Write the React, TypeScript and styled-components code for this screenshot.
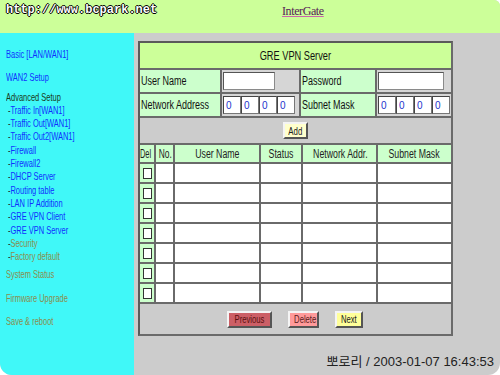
import React from "react";
import styled, { createGlobalStyle } from "styled-components";

const GlobalStyle = createGlobalStyle`
  html, body {
    margin: 0;
    padding: 0;
    background: #ffffff;
  }
  body {
    font-family: "Liberation Sans", Arial, sans-serif;
  }
`;

const sans = `"Liberation Sans", Arial, sans-serif`;

// the old page used a condensed face; squeeze Arial-width text to match
const Narrow = styled.span<{ $x?: number; $o?: string }>`
  display: inline-block;
  white-space: nowrap;
  transform: scaleX(${(p) => p.$x ?? 0.73});
  transform-origin: ${(p) => p.$o ?? "left"} center;
`;

const Frame = styled.div`
  width: 500px;
  height: 375px;
  display: grid;
  grid-template-rows: 33px 1fr;
  grid-template-columns: 134px 1fr;
  border-radius: 0 6px 12px 12px;
  overflow: hidden;
  background: #cccccc;
`;

const Header = styled.div`
  grid-column: 1 / 3;
  background: #ccff99;
  display: flex;
  align-items: flex-start;
  padding: 3px 0 0 6px;
`;

const SiteUrl = styled.div`
  font-family: "Liberation Mono", "DejaVu Sans Mono", monospace;
  font-weight: bold;
  font-size: 12px;
  line-height: 14px;
  color: #ffffff;
  text-shadow: 1px 0 0 #000, -1px 0 0 #000, 0 1px 0 #000, 0 -1px 0 #000;
  width: 148px;
  white-space: nowrap;
`;

const Brand = styled.a`
  margin-left: 128px;
  margin-top: 1px;
  font-family: "Liberation Serif", "Times New Roman", serif;
  font-size: 12px;
  letter-spacing: -0.4px;
  color: #552255;
  text-decoration: underline;
  text-decoration-color: #cc66aa;
`;

const Sidebar = styled.nav`
  background: #40f8f8;
  display: flex;
  flex-direction: column;
  padding: 15px 0 0 6px;
  font-family: ${sans};
  font-size: 11.5px;
`;

const MenuItem = styled.div<{ $tone?: "link" | "head" | "muted"; $gap?: number; $sub?: boolean }>`
  line-height: 13.3px;
  margin-top: ${(p) => p.$gap ?? 0}px;
  padding-left: ${(p) => (p.$sub ? 3 : 0)}px;
  white-space: nowrap;
  transform: scaleX(0.65);
  transform-origin: left center;
  color: ${(p) => (p.$tone === "head" ? "#1a3a1a" : p.$tone === "muted" ? "#8c8c4c" : "#1030ff")};
`;

const Dash = styled.span`
  color: #1a2a1a;
`;

const Main = styled.main`
  display: flex;
  flex-direction: column;
  padding: 8px 0 0 4px;
  font-family: ${sans};
`;

const Panel = styled.div`
  width: 311px;
  border: 2px solid #5a5a5a;
  border-right-color: #6a6a6a;
  border-bottom-color: #6a6a6a;
  background: #cccccc;
  display: flex;
  flex-direction: column;
`;

const TitleBar = styled.div`
  height: 25px;
  background: #ccff99;
  display: flex;
  align-items: center;
  justify-content: center;
  font-size: 12px;
  color: #111;
  border-bottom: 2px solid #6a6a6a;
`;

const FormGrid = styled.div`
  display: grid;
  grid-template-columns: 80px 77px 74px 74px;
  grid-auto-rows: 22px;
  gap: 2px;
  background: #6a6a6a;
  padding-bottom: 2px;
`;

const Label = styled.div`
  background: #ccffcc;
  font-size: 12.5px;
  color: #111;
  display: flex;
  align-items: center;
  padding-left: 1px;
  overflow: hidden;
`;

const InputCell = styled.div`
  background: #d6d6d6;
  display: flex;
  align-items: center;
  padding-left: 1px;
`;

const TextBox = styled.input<{ $w: number }>`
  width: ${(p) => p.$w}px;
  height: 18px;
  box-sizing: border-box;
  border: 1px solid #8a8a8a;
  border-top-color: #555;
  border-left-color: #555;
  background: #ffffff;
  outline: none;
`;

const IpBox = styled.input`
  width: 18px;
  height: 18px;
  box-sizing: border-box;
  border: 1px solid #777;
  border-top-color: #444;
  border-left-color: #444;
  background: #ffffff;
  color: #2233cc;
  font-family: ${sans};
  font-size: 10px;
  padding: 0 0 0 2px;
  outline: none;
`;

const AddRow = styled.div`
  height: 25px;
  display: flex;
  align-items: center;
  padding-left: 143px;
  border-bottom: 2px solid #6a6a6a;
`;

const Btn = styled.button<{ $bg: string; $fg?: string; $w: number }>`
  width: ${(p) => p.$w}px;
  height: 17px;
  padding: 0;
  background: ${(p) => p.$bg};
  color: ${(p) => p.$fg ?? "#222"};
  font-family: ${sans};
  font-size: 10.5px;
  border: 2px solid;
  border-color: #f4f4f4 #555 #555 #f4f4f4;
  overflow: hidden;
  cursor: pointer;
`;

const ListTable = styled.table`
  border-collapse: collapse;
  width: 311px;
  table-layout: fixed;
  font-size: 12px;
  th, td {
    border: 2px solid #6a6a6a;
    padding: 0;
  }
  thead th {
    border-top: none;
  }
  tr > :first-child {
    border-left: none;
  }
  tr > :last-child {
    border-right: none;
  }
`;

const HeadCell = styled.th`
  background: #ccffcc;
  font-weight: normal;
  height: 17px;
  color: #222;
  text-align: center;
  white-space: nowrap;
  overflow: hidden;
`;

const Cell = styled.td`
  background: #ffffff;
  height: 18px;
`;

const CheckCell = styled.td`
  background: #ccffcc;
  height: 18px;
  text-align: center;
`;

const CheckBox = styled.span`
  display: inline-block;
  width: 7px;
  height: 9px;
  border: 1px solid #333;
  background: #fff;
  vertical-align: middle;
`;

const ButtonRow = styled.div`
  height: 30px;
  display: flex;
  align-items: center;
  gap: 16px;
  padding-left: 87px;
`;

const Stamp = styled.div`
  margin-top: auto;
  margin-bottom: 5px;
  align-self: flex-end;
  margin-right: 6px;
  font-family: ${sans}, "Noto Sans CJK KR", sans-serif;
  font-size: 13px;
  color: #222;
`;

const menu: { text: string; tone?: "link" | "head" | "muted"; gap?: number; sub?: boolean }[] = [
  { text: "Basic [LAN/WAN1]" },
  { text: "WAN2 Setup", gap: 10 },
  { text: "Advanced Setup", tone: "head", gap: 6 },
  { text: "Traffic In[WAN1]", sub: true },
  { text: "Traffic Out[WAN1]", sub: true },
  { text: "Traffic Out2[WAN1]", sub: true },
  { text: "Firewall", sub: true },
  { text: "Firewall2", sub: true },
  { text: "DHCP Server", sub: true },
  { text: "Routing table", sub: true },
  { text: "LAN IP Addition", sub: true },
  { text: "GRE VPN Client", sub: true },
  { text: "GRE VPN Server", sub: true },
  { text: "Security", sub: true, tone: "muted" },
  { text: "Factory default", sub: true, tone: "muted" },
  { text: "System Status", tone: "muted", gap: 5 },
  { text: "Firmware Upgrade", tone: "muted", gap: 10 },
  { text: "Save & reboot", tone: "muted", gap: 10 },
];

const columns = [
  { title: "Del", w: 15, x: 0.62, o: "left" },
  { title: "No.", w: 19, x: 0.7, o: "center" },
  { title: "User Name", w: 86 },
  { title: "Status", w: 42 },
  { title: "Network Addr.", w: 75 },
  { title: "Subnet Mask" },
];

const IpFields = () => (
  <InputCell>
    {[0, 1, 2, 3].map((i) => (
      <IpBox key={i} defaultValue="0" />
    ))}
  </InputCell>
);

export default function App() {
  return (
    <>
      <GlobalStyle />
      <Frame>
        <Header>
          <SiteUrl>http://www.bcpark.net</SiteUrl>
          <Brand>InterGate</Brand>
        </Header>
        <Sidebar>
          {menu.map((m) => (
            <MenuItem key={m.text} $tone={m.tone} $gap={m.gap} $sub={m.sub}>
              {m.sub && <Dash>-</Dash>}
              {m.text}
            </MenuItem>
          ))}
        </Sidebar>
        <Main>
          <Panel>
            <TitleBar>
              <Narrow $x={0.77} $o="center">GRE VPN Server</Narrow>
            </TitleBar>
            <FormGrid>
              <Label>
                <Narrow $x={0.72}>User Name</Narrow>
              </Label>
              <InputCell>
                <TextBox $w={52} />
              </InputCell>
              <Label>
                <Narrow $x={0.72}>Password</Narrow>
              </Label>
              <InputCell>
                <TextBox $w={66} type="password" />
              </InputCell>
              <Label>
                <Narrow $x={0.72}>Network Address</Narrow>
              </Label>
              <IpFields />
              <Label>
                <Narrow $x={0.72}>Subnet Mask</Narrow>
              </Label>
              <IpFields />
            </FormGrid>
            <AddRow>
              <Btn $bg="#ffffcc" $w={25}>
                <Narrow $x={0.75} $o="center">Add</Narrow>
              </Btn>
            </AddRow>
            <ListTable>
              <colgroup>
                {columns.map((c) => (
                  <col key={c.title} style={c.w ? { width: c.w } : undefined} />
                ))}
              </colgroup>
              <thead>
                <tr>
                  {columns.map((c) => (
                    <HeadCell key={c.title} style={c.o === "left" ? { textAlign: "left" } : undefined}>
                      <Narrow $x={c.x ?? 0.73} $o={c.o ?? "center"}>
                        {c.title}
                      </Narrow>
                    </HeadCell>
                  ))}
                </tr>
              </thead>
              <tbody>
                {Array.from({ length: 7 }).map((_, r) => (
                  <tr key={r}>
                    <CheckCell>
                      <CheckBox />
                    </CheckCell>
                    <Cell />
                    <Cell />
                    <Cell />
                    <Cell />
                    <Cell />
                  </tr>
                ))}
              </tbody>
            </ListTable>
            <ButtonRow>
              <Btn $bg="#cc5f66" $fg="#5a1010" $w={45}>
                <Narrow $x={0.73} $o="center">Previous</Narrow>
              </Btn>
              <Btn $bg="#ff9a9a" $fg="#5a1a1a" $w={31}>
                <Narrow $x={0.73} $o="center">Delete</Narrow>
              </Btn>
              <Btn $bg="#ffff99" $w={28}>
                <Narrow $x={0.73} $o="center">Next</Narrow>
              </Btn>
            </ButtonRow>
          </Panel>
          <Stamp>뽀로리 / 2003-01-07 16:43:53</Stamp>
        </Main>
      </Frame>
    </>
  );
}
